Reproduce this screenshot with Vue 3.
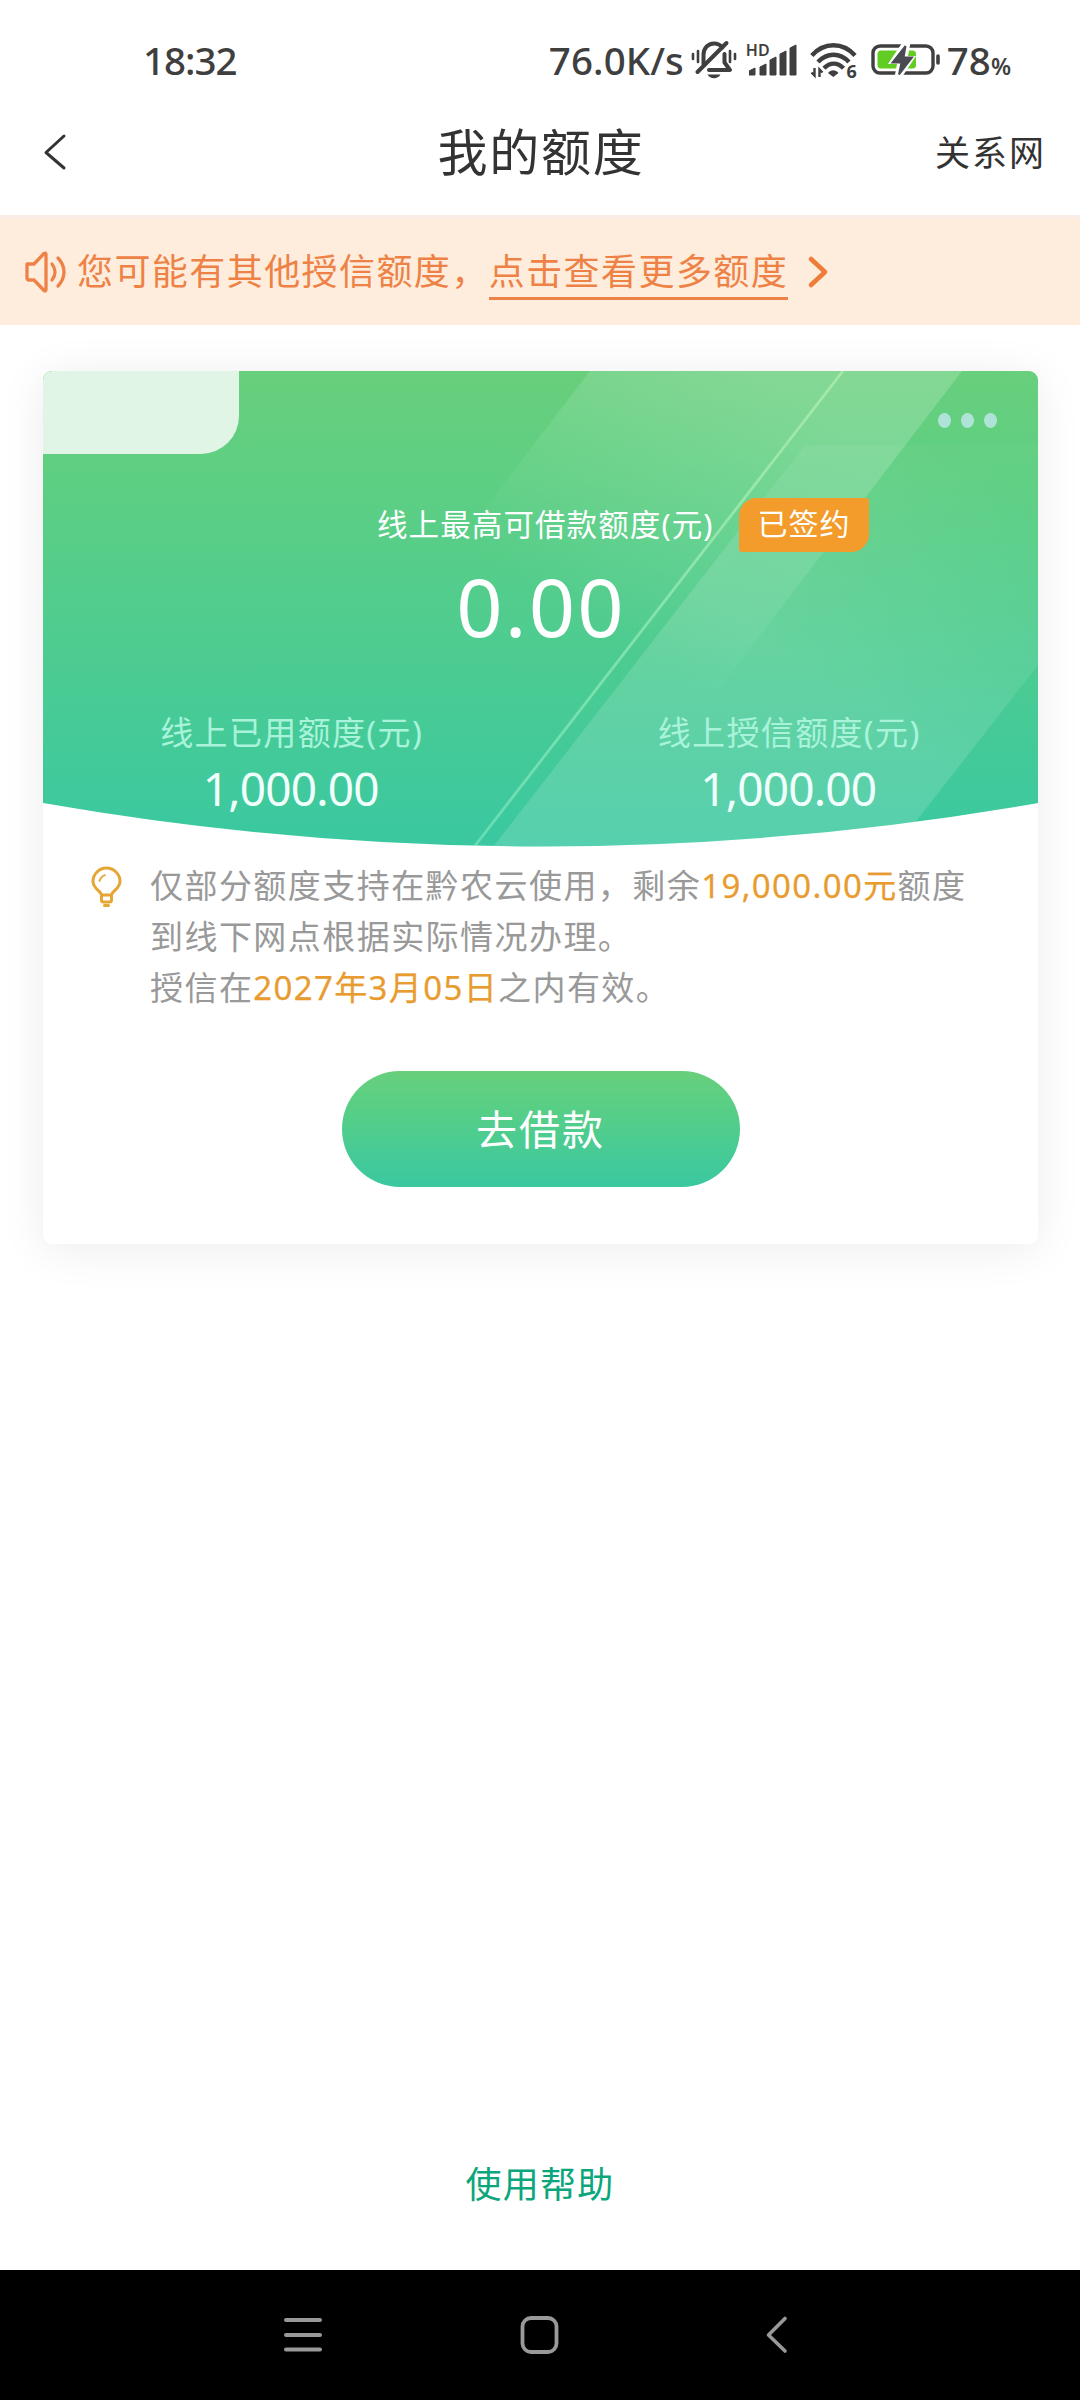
<script setup>
const bars = [
  [0, 30, 6, 7],
  [11, 26, 6, 11],
  [21, 19, 6, 18],
  [31, 13, 6, 24],
  [41, 7, 6, 30],
]
const stats = [
  { label: '线上已用额度(元)', value: '1,000.00' },
  { label: '线上授信额度(元)', value: '1,000.00' },
]
</script>

<template>
  <div class="page">
    <div class="status">
      <span class="time">18:32</span>
      <div class="tray">
        <span class="speed">76.0K/s</span>
        <svg class="bell" width="46" height="40" viewBox="0 0 46 40" fill="none" stroke="#3f3f3f" stroke-width="4" stroke-linecap="round">
          <path d="M2 14v5M7 11v11M39 11v11M44 14v5" stroke-width="2.6" />
          <path d="M12.5 24V15C12.5 8 17 3.4 23 3.4c3.5 0 6.500 1.600 8.400 4M33.500 14v8.500l5.500 7.500H18" stroke-linejoin="round" />
          <path d="M6.500 32 35.500 3" />
          <path d="M16.500 34.500h13c-1.500 2.600-3.700 3.800-6.500 3.800s-5-1.200-6.500-3.800z" fill="#3f3f3f" stroke="none" />
        </svg>
        <div class="signal">
          <span class="hd">HD</span>
          <svg width="50" height="40" viewBox="0 0 50 40" fill="#3f3f3f">
            <path v-for="b in bars" :key="b[0]" :d="`M${b[0]} ${b[1] + 3}l${b[2]}-3v${b[3]}h-${b[2]}z`" stroke="#3f3f3f" stroke-width="1" stroke-linejoin="round" />
          </svg>
        </div>
        <div class="wifi">
          <svg width="48" height="38" viewBox="0 0 48 38" fill="none" stroke="#3f3f3f" stroke-width="4.400">
            <path d="M1.800 13.500C14-0.200 33-0.200 45 13.500" />
            <path d="M8 20C17 10.300 30 10.300 39 20" />
            <path d="M14 26.300C20 20 27.500 20 33.500 26.300" />
            <path d="M18 31c3-3.700 7.500-3.700 10.500 0L23.300 35z" fill="#3f3f3f" stroke="none" />
            <path d="M4.500 26v7.500L1.500 30.500M9.500 35v-7.500l3 3" stroke-width="2.400" />
          </svg>
          <span class="six">6</span>
        </div>
        <svg class="battery" width="70" height="36" viewBox="0 0 70 36" fill="none">
          <rect x="2" y="4" width="60" height="27" rx="7" stroke="#3f3f3f" stroke-width="3.400" />
          <rect x="6.500" y="8.500" width="38.500" height="18" rx="3.500" fill="#61cc21" />
          <path d="M33-2 17 22h9L23 38h6L45 14H37l3-16z" fill="#fff" />
          <path d="M34.500 4 21.500 20.500h9L28 32.500 41 15.500h-8.500z" fill="#4a4a52" stroke="#4a4a52" stroke-width="2" />
          <path d="M67 14v7" stroke="#3f3f3f" stroke-width="3.600" stroke-linecap="round" />
        </svg>
        <span class="percent">78<small>%</small></span>
      </div>
    </div>

    <header class="header">
      <svg width="24" height="38" viewBox="0 0 24 38" fill="none" stroke="#333" stroke-width="3" stroke-linecap="round" stroke-linejoin="round"><path d="M21 3 3 19.500 21 35" /></svg>
      <h1>我的额度</h1>
      <span class="net">关系网</span>
    </header>

    <div class="notice">
      <svg class="speaker" width="42" height="44" viewBox="0 0 42 44" fill="none" stroke="#ee8246" stroke-width="3.300" stroke-linejoin="round" stroke-linecap="round">
        <path d="M2 14h7l10-10.500q2-1 2 1v35q0 2-2 1L9 30H4q-2 0-2-2z" />
        <path d="M27 14c4 5 4 11 0 16M33 8c8 8.500 8 19.500 0 28" />
      </svg>
      <span>您可能有其他授信额度，</span><a>点击查看更多额度</a>
      <svg class="more" width="24" height="34" viewBox="0 0 24 34" fill="none" stroke="#f07c3a" stroke-width="4.600" stroke-linecap="round" stroke-linejoin="round"><path d="M4 4 18 17 4 30" /></svg>
    </div>

    <main class="card">
      <section class="hero">
        <svg class="art" width="995" height="476" viewBox="0 0 995 476">
          <defs>
            <linearGradient id="base" x1="0" y1="0" x2="0" y2="1"><stop offset="0" stop-color="#68cf7c" /><stop offset=".22" stop-color="#5ecf82" /><stop offset="1" stop-color="#3ac8a1" /></linearGradient>
            <linearGradient id="beam" gradientUnits="userSpaceOnUse" x1="700" y1="0" x2="540" y2="250"><stop offset="0" stop-color="#fff" stop-opacity=".18" /><stop offset=".4" stop-color="#fff" stop-opacity=".11" /><stop offset="1" stop-color="#fff" stop-opacity="0" /></linearGradient>
            <linearGradient id="glass" gradientUnits="userSpaceOnUse" x1="900" y1="60" x2="740" y2="280"><stop offset="0" stop-color="#fff" stop-opacity=".02" /><stop offset="1" stop-color="#fff" stop-opacity=".14" /></linearGradient>
            <linearGradient id="ray" x1="0" y1="0" x2="0" y2="1"><stop offset="0" stop-color="#b0edab" stop-opacity=".8" /><stop offset="1" stop-color="#8ceec4" stop-opacity=".55" /></linearGradient>
            <clipPath id="bowl"><path d="M0 0H995V432Q746 475.500 497.500 475.500T0 432Z" /></clipPath>
          </defs>
          <g clip-path="url(#bowl)">
            <rect width="995" height="476" fill="url(#base)" />
            <path d="M547 0H919L676 318H304Z" fill="url(#beam)" />
            <path d="M762 74H995V294L853 476H450Z" fill="url(#glass)" />
            <path d="M800 0 431 476" stroke="url(#ray)" stroke-width="2.800" />
          </g>
        </svg>
        <div class="ribbon"></div>
        <div class="dots"><i></i><i></i><i></i></div>
        <div class="limit">
          <span class="caption">线上最高可借款额度(元)</span>
          <span class="signed">已签约</span>
        </div>
        <div class="amount">0.00</div>
        <div class="stats">
          <div v-for="s in stats" :key="s.label">
            <p>{{ s.label }}</p>
            <b>{{ s.value }}</b>
          </div>
        </div>
      </section>
      <section class="tip">
        <svg width="34" height="44" viewBox="0 0 34 44" fill="none" stroke="#e5a635" stroke-width="3" stroke-linecap="round" stroke-linejoin="round">
          <path d="M10.500 30C10 26 2 23.500 2 16.500a13.500 13.500 0 0 1 27 0C29 23.500 21 26 20.500 30zM10.500 31v4q0 2 2 2h6q2 0 2-2V31M13.500 40.500h4" />
          <path d="M8.500 16c.8-3 2.500-4.800 5.500-5.800" stroke-width="1.800" />
        </svg>
        <div class="copy">
          <p>仅部分额度支持在黔农云使用，剩余<em class="money">19,000.00元</em>额度</p>
          <p>到线下网点根据实际情况办理。</p>
          <p>授信在<em class="date">2027年3月05日</em>之内有效。</p>
        </div>
      </section>
      <button class="borrow">去借款</button>
    </main>

    <a class="help">使用帮助</a>

    <nav class="nav">
      <svg width="40" height="44" viewBox="0 0 40 44" stroke="#999" stroke-width="4" stroke-linecap="round"><path d="M3 7h34M3 22h34M3 36.500h34" /></svg>
      <svg width="40" height="44" viewBox="0 0 40 44" fill="none" stroke="#999" stroke-width="3.800"><rect x="2.500" y="5" width="34" height="34" rx="8.500" /></svg>
      <svg width="40" height="44" viewBox="0 0 40 44" fill="none" stroke="#999" stroke-width="3.600" stroke-linecap="round" stroke-linejoin="round"><path d="M28 5.500 11.500 22 28 38" /></svg>
    </nav>
  </div>
</template>

<style>
body { margin: 0; }
</style>

<style scoped>
.page { width: 1080px; height: 2400px; display: flex; flex-direction: column; background: #fff; overflow: hidden; color: #333; font-family: "Noto Sans", "Noto Sans CJK SC", sans-serif; }
p, h1 { margin: 0; font-weight: 400; }
svg { display: block; flex: none; }
.status { height: 120px; display: flex; justify-content: space-between; padding: 0 69px 0 143px; color: #3f3f3f; font-size: 38.500px; font-weight: 500; line-height: 120px; white-space: nowrap; box-sizing: border-box; }
.time { letter-spacing: -1px; }
.tray { display: flex; }
.speed { width: 142px; letter-spacing: .1px; }
.bell { margin-top: 40px; }
.signal { position: relative; width: 50px; margin-left: 12px; }
.signal svg { margin-top: 38px; }
.hd { position: absolute; left: -3px; top: 42px; font-size: 16px; line-height: 16px; font-weight: 600; }
.wifi { position: relative; margin: 42px 0 0 11px; width: 48px; height: 38px; }
.six { position: absolute; right: 1px; bottom: 0; font-size: 18px; font-weight: 700; line-height: 17px; }
.battery { margin: 42px 0 0 13px; }
.percent { margin-left: 6px; }
.percent small { font-size: 23px; font-weight: 600; }
.header { height: 95px; display: grid; grid-template-columns: 200px 1fr 200px; align-items: center; padding: 0 34px 32px 43px; box-sizing: border-box; }
.header h1 { text-align: center; font-size: 50px; line-height: 60px; letter-spacing: 1.800px; text-indent: -7px; }
.net { text-align: right; font-size: 35px; line-height: 50px; letter-spacing: 2px; padding-top: 2px; }
.notice { height: 110px; display: flex; align-items: center; padding-left: 25px; background: #feeddc; box-sizing: border-box; border-top: 4px solid #faece7; color: #ee8246; font-size: 36px; line-height: 50px; letter-spacing: 1.430px; }
.notice span, .notice a { margin-top: -1px; }
.speaker { margin-right: 10px; }
.notice a { position: relative; }
.notice a::after { content: ""; position: absolute; left: 0; right: 0; bottom: -3px; height: 3px; background: #ee8246; }
.more { margin-left: 19px; }
.card { width: 995px; height: 873px; margin: 46px 0 0 43px; border-radius: 9px; background: #fff; box-shadow: 0 5px 46px rgba(0, 0, 0, .08); overflow: hidden; flex: none; }
.hero { position: relative; height: 476px; color: #fff; }
.hero > div { position: relative; }
.hero .art { position: absolute; left: 0; top: 0; }
.hero > .ribbon { position: absolute; left: 0; top: 0; width: 196px; height: 83px; background: #e0f5e5; border-radius: 9px 0 38px 0; }
.hero > .dots { position: absolute; right: 41px; top: 42px; display: flex; gap: 10px; }
.dots i { width: 13px; height: 15px; border-radius: 50%; background: #afe3d8; }
.limit { display: flex; align-items: center; padding: 127px 0 0 334px; white-space: nowrap; }
.caption { width: 362px; font-size: 30.500px; letter-spacing: 1.100px; line-height: 54px; margin-top: -3px; }
.signed { width: 130px; height: 54px; text-align: center; background: #f39c2b; border-radius: 18px 3px 18px 3px; font-size: 30px; line-height: 52px; letter-spacing: 1px; }
.amount { text-align: center; font-size: 81px; letter-spacing: 2.200px; line-height: 100px; padding: 4px 0 0 1px; }
.stats { display: flex; margin-top: 53px; text-align: center; }
.stats div { width: 497.500px; }
.stats p { font-size: 33px; line-height: 48px; letter-spacing: 1.350px; color: #a9f3da; }
.stats b { display: block; font-weight: 400; font-size: 46px; line-height: 62px; letter-spacing: -.8px; text-indent: -2px; color: #f0fffb; }
.tip { display: flex; padding: 18px 0 0 48px; color: #999; font-size: 33px; line-height: 51px; letter-spacing: 1.450px; white-space: nowrap; }
.copy { margin: -5px 0 0 25px; }
.tip em { font-style: normal; color: #e89c30; -webkit-text-stroke: .25px #e89c30; }
.money { letter-spacing: 1.350px; }
.date { letter-spacing: 1.350px; }
.borrow { display: block; margin: 58px auto 0; width: 398px; height: 116px; border: 0; border-radius: 58px; padding: 0 0 5px; background: linear-gradient(#68cf7c, #5bcf83 25%, #3ac8a1); color: #fff; font: inherit; font-size: 41px; letter-spacing: 2px; }
.help { margin-top: auto; margin-bottom: 60px; text-align: center; color: #0ba67c; font-size: 36px; line-height: 50px; letter-spacing: 1.200px; }
.nav { height: 130px; flex: none; display: flex; align-items: center; justify-content: center; gap: 197px; background: #000; }
</style>
